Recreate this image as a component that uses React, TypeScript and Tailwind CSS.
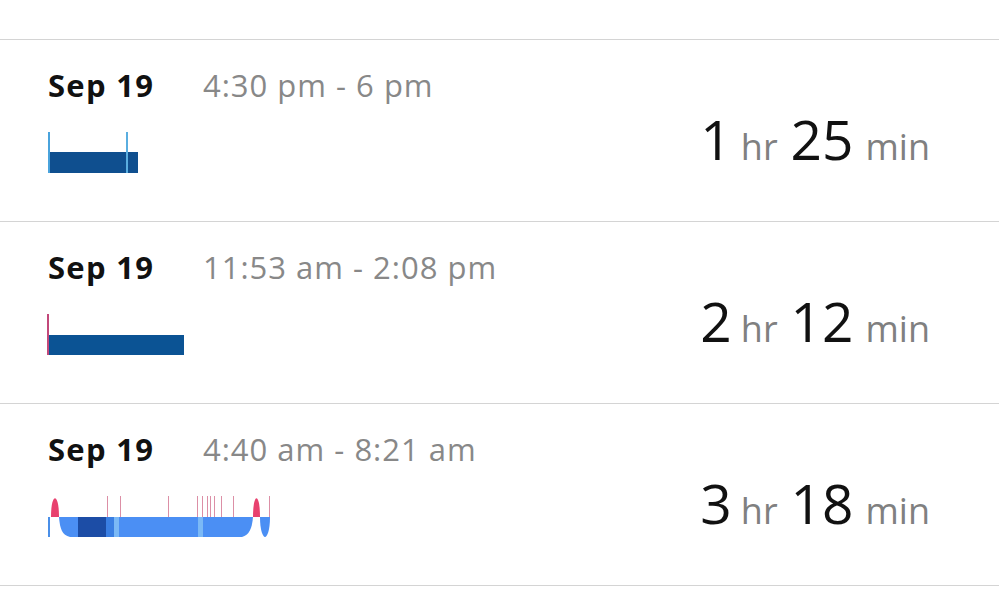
import React from "react";

const font = { fontFamily: "'Open Sans', Lato, sans-serif" };

function Bar1() {
  return (
    <svg width="240" height="41" viewBox="0 0 240 41">
      <rect x="4" y="20" width="88" height="21" fill="#0f4f8f" />
      <rect x="2" y="0" width="2" height="41" fill="#4aa3dc" />
      <rect x="80" y="0" width="2" height="41" fill="#5aaee0" />
    </svg>
  );
}

function Bar2() {
  return (
    <svg width="240" height="41" viewBox="0 0 240 41">
      <rect x="3" y="21" width="135" height="20" fill="#0b5394" />
      <rect x="1" y="0" width="2" height="41" fill="#c2487a" />
    </svg>
  );
}

function Bar3() {
  const pinks = [61, 74, 122, 151, 156, 161, 164, 168, 175, 187, 223];
  return (
    <svg width="240" height="41" viewBox="0 0 240 41">
      <rect x="2" y="21" width="2" height="20" fill="#4a8fe8" />
      <path d="M5 21 C5 -4 13 -4 13 21 Z" fill="#e8416f" />
      <path d="M13 21 L207 21 C206 33 203 39 196 41 L24 41 C16 39 14 33 13 21 Z" fill="#4b8ff4" />
      <rect x="32" y="21" width="28" height="20" fill="#1c4da6" />
      <rect x="60" y="21" width="8" height="20" fill="#3a7fe3" />
      <rect x="68" y="21" width="5" height="20" fill="#7bb9f6" />
      <rect x="152" y="21" width="5" height="20" fill="#7bb9f6" />
      {pinks.map((x) => (
        <rect key={x} x={x} y="0" width="1" height="21" fill="#dc8fa6" />
      ))}
      <path d="M207 21 C207 -4 214 -4 214 21 Z" fill="#e8416f" />
      <path d="M214 21 L224 21 C224 35 221 41 219 41 C217 41 214 35 214 21 Z" fill="#4b8ff4" />
    </svg>
  );
}

function Row({
  time,
  h,
  m,
  bar,
}: {
  time: string;
  h: string;
  m: string;
  bar: React.ReactNode;
}) {
  return (
    <div className="relative h-[182px] border-t border-[#d4d4d4]" style={font}>
      <div className="absolute left-[48px] top-[26px] flex items-baseline">
        <span className="w-[155px] text-[31px] font-bold leading-[38px] tracking-[1.3px] text-[#111]">Sep 19</span>
        <span className="text-[31px] leading-[38px] tracking-[1px] text-[#888]">{time}</span>
      </div>
      <div className="absolute left-[46px] top-[92px]">{bar}</div>
      <div className="absolute right-[69px] top-[71px] flex items-baseline leading-none">
        <span className="text-[55px] text-[#111]">{h}</span>
        <span className="ml-[9px] text-[36px] text-[#808080]">hr</span>
        <span className="ml-[13px] text-[55px] text-[#111]">{m}</span>
        <span className="ml-[12px] text-[36px] text-[#808080]">min</span>
      </div>
    </div>
  );
}

export default function App() {
  return (
    <div className="h-[612px] w-[999px] overflow-hidden bg-white">
      <div className="h-[39px]" />
      <Row time="4:30 pm - 6 pm" h="1" m="25" bar={<Bar1 />} />
      <Row time="11:53 am - 2:08 pm" h="2" m="12" bar={<Bar2 />} />
      <Row time="4:40 am - 8:21 am" h="3" m="18" bar={<Bar3 />} />
      <div className="border-t border-[#d4d4d4]" />
    </div>
  );
}
